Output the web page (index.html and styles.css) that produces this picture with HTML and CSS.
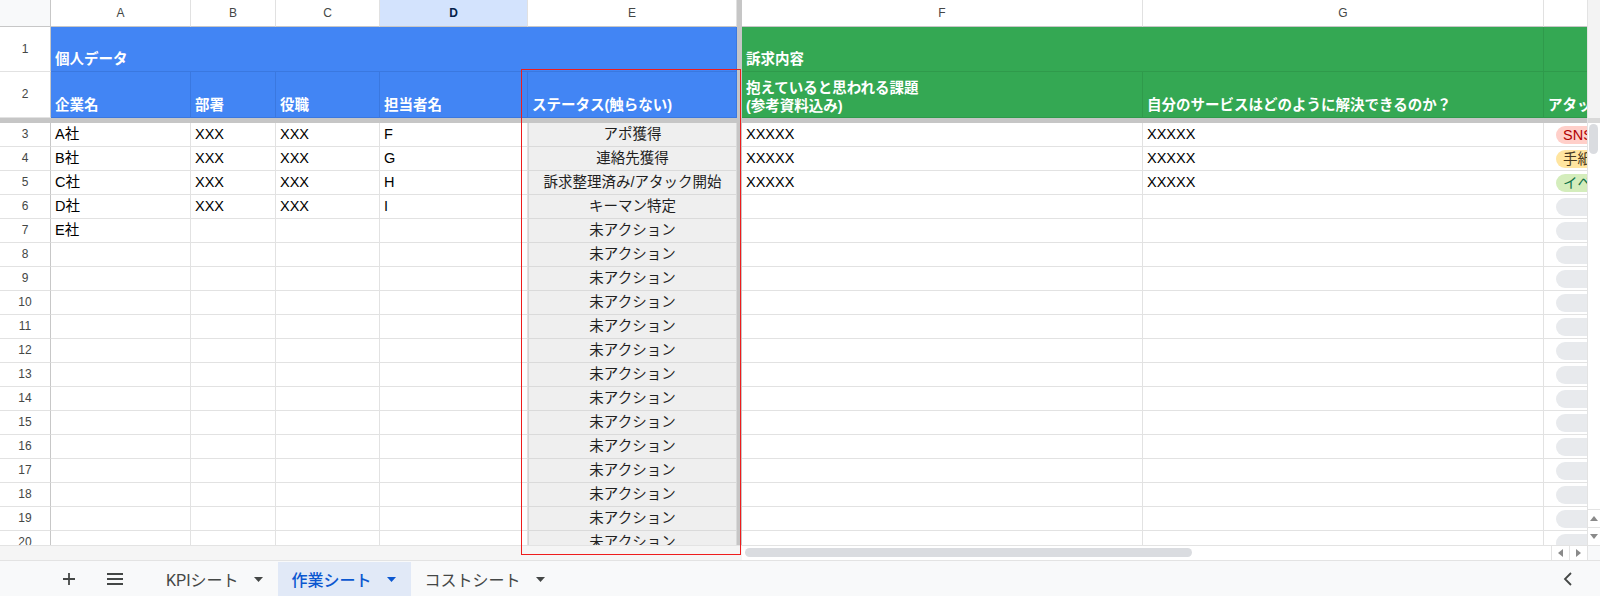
FILE: index.html
```html
<!DOCTYPE html>
<html lang="ja">
<head>
<meta charset="utf-8">
<title>作業シート</title>
<link rel="stylesheet" href="styles.css">
</head>
<body>
<div class="app">
  <div class="main">
    <div class="viewport">
      <div class="sheet">
        <!-- column header -->
        <div class="c corner"></div>
        <div class="c ch">A</div>
        <div class="c ch">B</div>
        <div class="c ch">C</div>
        <div class="c ch sel">D</div>
        <div class="c ch">E</div>
        <div class="fz"></div>
        <div class="c ch">F</div>
        <div class="c ch">G</div>
        <div class="c ch"></div>
        <!-- row 1 -->
        <div class="c rn">1</div>
        <div class="c hb span5">個人データ</div>
        <div class="fz"></div>
        <div class="c hg span2">訴求内容</div>
        <div class="c hg"></div>
        <!-- row 2 -->
        <div class="c rn">2</div>
        <div class="c hb">企業名</div>
        <div class="c hb">部署</div>
        <div class="c hb">役職</div>
        <div class="c hb">担当者名</div>
        <div class="c hb">ステータス(触らない)</div>
        <div class="fz"></div>
        <div class="c hg two">抱えていると思われる課題<br>(参考資料込み)</div>
        <div class="c hg">自分のサービスはどのように解決できるのか？</div>
        <div class="c hg">アタック方法</div>
        <!-- freeze row -->
        <div class="fzrow"></div>
        <!-- row 3 -->
        <div class="c rn">3</div><div class="c">A社</div><div class="c">XXX</div><div class="c">XXX</div><div class="c">F</div><div class="c st">アポ獲得</div><div class="fz"></div><div class="c">XXXXX</div><div class="c">XXXXX</div><div class="c pc"><span class="pill red">SNS</span></div>
        <!-- row 4 -->
        <div class="c rn">4</div><div class="c">B社</div><div class="c">XXX</div><div class="c">XXX</div><div class="c">G</div><div class="c st">連絡先獲得</div><div class="fz"></div><div class="c">XXXXX</div><div class="c">XXXXX</div><div class="c pc"><span class="pill yellow">手紙</span></div>
        <!-- row 5 -->
        <div class="c rn">5</div><div class="c">C社</div><div class="c">XXX</div><div class="c">XXX</div><div class="c">H</div><div class="c st">訴求整理済み/アタック開始</div><div class="fz"></div><div class="c">XXXXX</div><div class="c">XXXXX</div><div class="c pc"><span class="pill green">イベント</span></div>
        <!-- row 6 -->
        <div class="c rn">6</div><div class="c">D社</div><div class="c">XXX</div><div class="c">XXX</div><div class="c">I</div><div class="c st">キーマン特定</div><div class="fz"></div><div class="c"></div><div class="c"></div><div class="c pc"><span class="pill"></span></div>
        <!-- row 7 -->
        <div class="c rn">7</div><div class="c">E社</div><div class="c"></div><div class="c"></div><div class="c"></div><div class="c st">未アクション</div><div class="fz"></div><div class="c"></div><div class="c"></div><div class="c pc"><span class="pill"></span></div>
        <!-- row 8 -->
        <div class="c rn">8</div><div class="c"></div><div class="c"></div><div class="c"></div><div class="c"></div><div class="c st">未アクション</div><div class="fz"></div><div class="c"></div><div class="c"></div><div class="c pc"><span class="pill"></span></div>
        <!-- row 9 -->
        <div class="c rn">9</div><div class="c"></div><div class="c"></div><div class="c"></div><div class="c"></div><div class="c st">未アクション</div><div class="fz"></div><div class="c"></div><div class="c"></div><div class="c pc"><span class="pill"></span></div>
        <!-- row 10 -->
        <div class="c rn">10</div><div class="c"></div><div class="c"></div><div class="c"></div><div class="c"></div><div class="c st">未アクション</div><div class="fz"></div><div class="c"></div><div class="c"></div><div class="c pc"><span class="pill"></span></div>
        <!-- row 11 -->
        <div class="c rn">11</div><div class="c"></div><div class="c"></div><div class="c"></div><div class="c"></div><div class="c st">未アクション</div><div class="fz"></div><div class="c"></div><div class="c"></div><div class="c pc"><span class="pill"></span></div>
        <!-- row 12 -->
        <div class="c rn">12</div><div class="c"></div><div class="c"></div><div class="c"></div><div class="c"></div><div class="c st">未アクション</div><div class="fz"></div><div class="c"></div><div class="c"></div><div class="c pc"><span class="pill"></span></div>
        <!-- row 13 -->
        <div class="c rn">13</div><div class="c"></div><div class="c"></div><div class="c"></div><div class="c"></div><div class="c st">未アクション</div><div class="fz"></div><div class="c"></div><div class="c"></div><div class="c pc"><span class="pill"></span></div>
        <!-- row 14 -->
        <div class="c rn">14</div><div class="c"></div><div class="c"></div><div class="c"></div><div class="c"></div><div class="c st">未アクション</div><div class="fz"></div><div class="c"></div><div class="c"></div><div class="c pc"><span class="pill"></span></div>
        <!-- row 15 -->
        <div class="c rn">15</div><div class="c"></div><div class="c"></div><div class="c"></div><div class="c"></div><div class="c st">未アクション</div><div class="fz"></div><div class="c"></div><div class="c"></div><div class="c pc"><span class="pill"></span></div>
        <!-- row 16 -->
        <div class="c rn">16</div><div class="c"></div><div class="c"></div><div class="c"></div><div class="c"></div><div class="c st">未アクション</div><div class="fz"></div><div class="c"></div><div class="c"></div><div class="c pc"><span class="pill"></span></div>
        <!-- row 17 -->
        <div class="c rn">17</div><div class="c"></div><div class="c"></div><div class="c"></div><div class="c"></div><div class="c st">未アクション</div><div class="fz"></div><div class="c"></div><div class="c"></div><div class="c pc"><span class="pill"></span></div>
        <!-- row 18 -->
        <div class="c rn">18</div><div class="c"></div><div class="c"></div><div class="c"></div><div class="c"></div><div class="c st">未アクション</div><div class="fz"></div><div class="c"></div><div class="c"></div><div class="c pc"><span class="pill"></span></div>
        <!-- row 19 -->
        <div class="c rn">19</div><div class="c"></div><div class="c"></div><div class="c"></div><div class="c"></div><div class="c st">未アクション</div><div class="fz"></div><div class="c"></div><div class="c"></div><div class="c pc"><span class="pill"></span></div>
        <!-- row 20 -->
        <div class="c rn">20</div><div class="c"></div><div class="c"></div><div class="c"></div><div class="c"></div><div class="c st">未アクション</div><div class="fz"></div><div class="c"></div><div class="c"></div><div class="c pc"><span class="pill"></span></div>
      </div>
    </div>
    <div class="vscroll">
      <div class="vs-frozen"></div>
      <div class="vs-track"><div class="vs-thumb"></div></div>
      <div class="vs-btn"><svg width="8" height="5" viewBox="0 0 8 5"><path d="M0 5 L4 0 L8 5 Z" fill="#8a8a8a"/></svg></div>
      <div class="vs-btn"><svg width="8" height="5" viewBox="0 0 8 5"><path d="M0 0 L4 5 L8 0 Z" fill="#8a8a8a"/></svg></div>
    </div>
  </div>
  <div class="hbar">
    <div class="hb-frozen"></div>
    <div class="hb-track"><div class="hb-thumb"></div></div>
    <div class="hb-btn"><svg width="5" height="8" viewBox="0 0 5 8"><path d="M5 0 L0 4 L5 8 Z" fill="#8a8a8a"/></svg></div>
    <div class="hb-btn"><svg width="5" height="8" viewBox="0 0 5 8"><path d="M0 0 L5 4 L0 8 Z" fill="#8a8a8a"/></svg></div>
    <div class="hb-corner"></div>
  </div>
  <div class="tabbar">
    <div class="tb-icon plus"><svg width="14" height="14" viewBox="0 0 14 14"><path d="M7 1 V13 M1 7 H13" stroke="#444746" stroke-width="1.8" fill="none"/></svg></div>
    <div class="tb-icon menu"><svg width="18" height="14" viewBox="0 0 18 14"><path d="M1 2 H17 M1 7 H17 M1 12 H17" stroke="#444746" stroke-width="1.8" fill="none"/></svg></div>
    <div class="tab"><span>KPIシート</span><svg class="caret" width="9" height="5" viewBox="0 0 9 5"><path d="M0 0 L4.5 5 L9 0 Z" fill="#444746"/></svg></div>
    <div class="tab active"><span>作業シート</span><svg class="caret" width="9" height="5" viewBox="0 0 9 5"><path d="M0 0 L4.5 5 L9 0 Z" fill="#0b57d0"/></svg></div>
    <div class="tab"><span>コストシート</span><svg class="caret" width="9" height="5" viewBox="0 0 9 5"><path d="M0 0 L4.5 5 L9 0 Z" fill="#444746"/></svg></div>
    <div class="tb-spacer"></div>
    <div class="tb-icon chev"><svg width="10" height="14" viewBox="0 0 10 14"><path d="M8 1 L2 7 L8 13" stroke="#444746" stroke-width="1.8" fill="none"/></svg></div>
  </div>
  <div class="highlight"></div>
</div>
</body>
</html>
```

FILE: styles.css
```css
body {
  margin: 0;
}

.app {
  position: relative;
  width: 1600px;
  height: 596px;
  overflow: hidden;
  background: #ffffff;
  font-family: "Liberation Sans", Arial, "Noto Sans CJK JP", sans-serif;
  color: #000;
}

.main {
  display: flex;
  height: 545px;
}

.viewport {
  width: 1587px;
  height: 545px;
  overflow: hidden;
  flex: none;
}

.sheet {
  display: grid;
  grid-template-columns: 51px 140px 85px 104px 148px 209px 5px 401px 401px 200px;
  grid-template-rows: 27px 45px 46px 5px;
  grid-auto-rows: 24px;
  width: 1744px;
}

.c {
  box-sizing: border-box;
  border-right: 1px solid #e2e2e2;
  border-bottom: 1px solid #e2e2e2;
  padding: 0 4px;
  display: flex;
  align-items: center;
  white-space: nowrap;
  overflow: hidden;
  font-size: 14.5px;
  line-height: 17px;
}

.corner {
  background: #f8f9fa;
  border-right-color: #c7c7c7;
  border-bottom-color: #c7c7c7;
}

.ch {
  justify-content: center;
  font-size: 12px;
  color: #444746;
  border-bottom-color: #c7c7c7;
  border-right-color: #e1e1e1;
}

.ch.sel {
  background: #d3e3fd;
  color: #041e49;
  font-weight: bold;
}

.rn {
  justify-content: center;
  font-size: 12px;
  color: #444746;
  border-right-color: #c7c7c7;
  padding: 0;
}

.fz {
  background: #c6c6c6;
}

.fzrow {
  grid-column: 1 / -1;
  background: #c6c6c6;
}

.hb,
.hg {
  color: #ffffff;
  font-weight: bold;
  align-items: flex-end;
  padding-bottom: 3px;
}

.hb {
  background: #4285f4;
  border-right-color: #3a78e0;
  border-bottom-color: #3a78e0;
}

.hg {
  background: #34a853;
  border-right-color: #2f9a4b;
  border-bottom-color: #2f9a4b;
}

.hg.two {
  line-height: 18px;
  padding-bottom: 2px;
}

.span5 {
  grid-column: span 5;
}

.span2 {
  grid-column: span 2;
}

.st {
  background: #efefef;
  justify-content: center;
  color: #1f1f1f;
  border-left: 1px solid #d6d6d6;
  border-right-color: #dadada;
  border-bottom-color: #dadada;
}

.pc {
  padding-left: 12px;
}

.pill {
  display: block;
  width: 90px;
  height: 18px;
  line-height: 18px;
  border-radius: 9px;
  padding: 0 7px;
  background: #e8eaed;
  font-size: 14.5px;
  flex: none;
}

.pill.red {
  background: #ffcfc9;
  color: #b10202;
}

.pill.yellow {
  background: #ffe5a0;
  color: #473821;
}

.pill.green {
  background: #d4edbc;
  color: #11734b;
}

/* vertical scrollbar */
.vscroll {
  width: 13px;
  display: flex;
  flex-direction: column;
  border-left: 1px solid #e3e3e3;
  box-sizing: border-box;
  background: #fff;
}

.vs-frozen {
  height: 118px;
  background: #f3f3f3;
  border-bottom: 5px solid #d9d9d9;
}

.vs-track {
  flex: 1;
  padding: 1px 1px 0 1px;
}

.vs-thumb {
  height: 30px;
  width: 9px;
  border-radius: 5px;
  background: #dadce0;
}

.vs-btn {
  height: 18px;
  display: flex;
  align-items: center;
  justify-content: center;
  border-top: 1px solid #e3e3e3;
  box-sizing: border-box;
}

/* horizontal scrollbar */
.hbar {
  display: flex;
  height: 15px;
  border-top: 1px solid #e3e3e3;
  box-sizing: border-box;
}

.hb-frozen {
  width: 742px;
  background: #f5f5f5;
}

.hb-track {
  flex: 1;
  padding: 2px 0 0 3px;
  background: #fff;
}

.hb-thumb {
  width: 447px;
  height: 9px;
  border-radius: 5px;
  background: #dadce0;
}

.hb-btn {
  width: 18px;
  display: flex;
  align-items: center;
  justify-content: center;
  border-left: 1px solid #e3e3e3;
  box-sizing: border-box;
}

.hb-corner {
  width: 13px;
  background: #f8f9fa;
  border-left: 1px solid #e3e3e3;
  box-sizing: border-box;
}

/* sheet tabs */
.tabbar {
  display: flex;
  align-items: stretch;
  height: 36px;
  box-sizing: border-box;
  border-top: 1px solid #e3e3e3;
  background: #f8f9fa;
  padding: 1px 0 0 62px;
  font-family: Roboto, "Noto Sans CJK JP", sans-serif;
  font-size: 16px;
  color: #444746;
}

.tb-icon {
  display: flex;
  align-items: center;
  justify-content: center;
}

.tb-icon.plus {
  width: 14px;
}

.tb-icon.menu {
  width: 18px;
  margin-left: 30px;
  margin-right: 28px;
}

.tab {
  display: flex;
  align-items: center;
  padding: 0 15px 0 14px;
  gap: 15px;
  white-space: nowrap;
}

.tab.active {
  background: #e1e9f7;
  color: #0b57d0;
  font-weight: 500;
}

.caret {
  flex: none;
}

.tb-spacer {
  flex: 1;
}

.tb-icon.chev {
  width: 10px;
  margin-right: 27px;
}

/* red annotation rectangle */
.highlight {
  position: absolute;
  left: 521px;
  top: 69px;
  width: 218px;
  height: 484px;
  border: 1px solid #ee1c1c;
  pointer-events: none;
}
```
